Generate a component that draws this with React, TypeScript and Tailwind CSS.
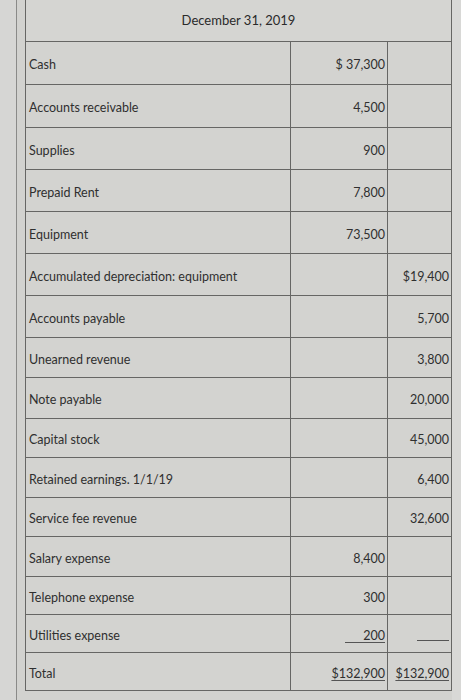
import React from "react";

type Row = {
    label: string;
    debit?: React.ReactNode;
    credit?: React.ReactNode;
    h: string;
};

const rows: Row[] = [
    { label: "Cash", debit: "$ 37,300", h: "h-[43px]" },
    { label: "Accounts receivable", debit: "4,500", h: "h-[43px]" },
    { label: "Supplies", debit: "900", h: "h-[42px]" },
    { label: "Prepaid Rent", debit: "7,800", h: "h-[42px]" },
    { label: "Equipment", debit: "73,500", h: "h-[42px]" },
    { label: "Accumulated depreciation: equipment", credit: "$19,400", h: "h-[42px]" },
    { label: "Accounts payable", credit: "5,700", h: "h-[42px]" },
    { label: "Unearned revenue", credit: "3,800", h: "h-[40px]" },
    { label: "Note payable", credit: "20,000", h: "h-[41px]" },
    { label: "Capital stock", credit: "45,000", h: "h-[39px]" },
    { label: "Retained earnings. 1/1/19", credit: "6,400", h: "h-[40px]" },
    { label: "Service fee revenue", credit: "32,600", h: "h-[39px]" },
    { label: "Salary expense", debit: "8,400", h: "h-[40px]" },
    { label: "Telephone expense", debit: "300", h: "h-[38px]" },
    {
        label: "Utilities expense",
        debit: (
            <span className="inline-block w-[40px] border-b border-[#555] text-right leading-[13px]">200</span>
        ),
        credit: <span className="mt-[8px] inline-block w-[32px] border-b border-[#555]" />,
        h: "h-[38px]",
    },
    {
        label: "Total",
        debit: <span className="underline decoration-[#555] underline-offset-2">$132,900</span>,
        credit: <span className="underline decoration-[#555] underline-offset-2">$132,900</span>,
        h: "h-[38px]",
    },
];

export default function App() {
    return (
        <div
            className="flex h-[700px] w-[461px] overflow-hidden bg-[#d2d2cf] text-[12.5px] text-[#2f2f2f]"
            style={{ fontFamily: "Lato, 'Open Sans', sans-serif" }}
        >
            <div className="w-[17px] shrink-0 border-r border-[#8a8a88] bg-[#d6d6d4]" />
            <div className="ml-[8px] w-[427px] shrink-0">
                <div className="flex h-[42px] items-center justify-center border-x border-b border-[#666664] bg-[#d5d5d2] text-[13px] text-[#2a2a2a]">
                    December 31, 2019
                </div>
                {rows.map((r) => (
                    <div
                        key={r.label}
                        className={`grid grid-cols-[264px_97px_1fr] border-x border-b border-[#666664] bg-[#d3d3d0] ${r.h}`}
                    >
                        <div className="flex items-center pl-[3px] pt-[5px]">{r.label}</div>
                        <div className="flex items-center justify-end border-l border-[#666664] pr-[2px] pt-[5px]">
                            {r.debit}
                        </div>
                        <div className="flex items-center justify-end border-l border-[#666664] pr-[2px] pt-[5px]">
                            {r.credit}
                        </div>
                    </div>
                ))}
            </div>
            <div className="flex-1 bg-[#d8d8d6]" />
        </div>
    );
}
